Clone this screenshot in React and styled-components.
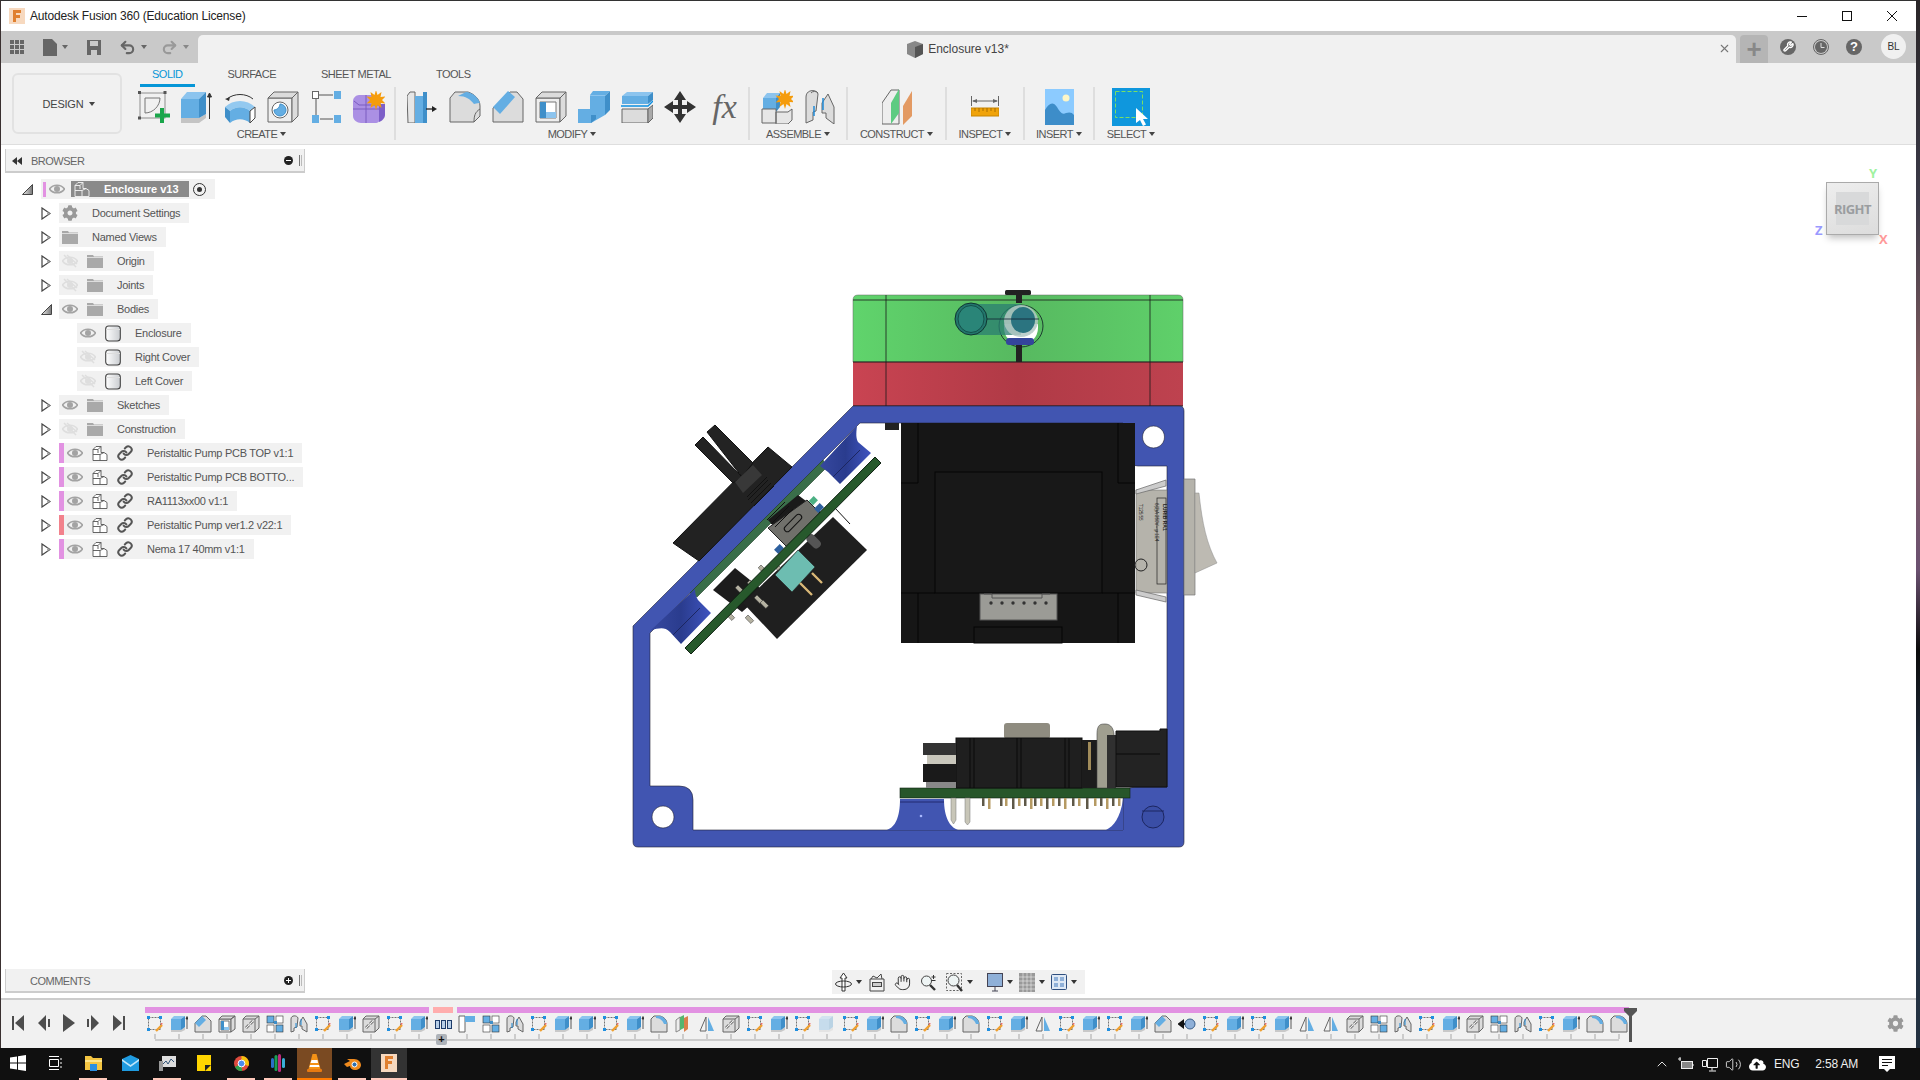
import styled, { createGlobalStyle } from 'styled-components';
import { Hand, Link, Redo2, Undo2, Volume2, ChevronUp, Wrench, X } from 'lucide-react';
import { FaCog, FaCloudUploadAlt } from 'react-icons/fa';

const BLUE = '#64aee3';
const BLUE_DARK = '#3f8fc9';
const GREY = '#dcdcdc';
const LINE = '#666';
const PANEL = '#f1f1f1';
const ENCLOSURE = '#4155b1';

const GlobalStyle = createGlobalStyle`
  html, body { margin: 0; padding: 0; background: #111; }
  * { box-sizing: border-box; }
  body { font-family: "Liberation Sans", Arial, sans-serif; }
`;

const Screen = styled.div`
  width: 1920px;
  height: 1080px;
  overflow: hidden;
  display: flex;
  flex-direction: column;
  background: linear-gradient(180deg, #2a2628 0, #3b3a48 200px, #8a6062 400px, #6a5070 570px, #0c0c0c 650px, #2a3a52 800px, #22303f 1048px);
`;
const AppWindow = styled.div`
  width: 1916px;
  height: 1048px;
  display: flex;
  flex-direction: column;
  border-top: 1px solid #333;
  border-left: 1px solid #3a3030;
  background: #fff;
`;
const TitleBar = styled.div`
  height: 30px;
  flex: none;
  display: flex;
  align-items: center;
  padding: 0 2px 0 8px;
  background: #fff;
  font-size: 12px;
  color: #222;
`;
const TitleText = styled.span`
  margin-left: 5px;
  flex: 1;
  letter-spacing: -0.17px;
`;
const WindowButton = styled.div`
  width: 45px;
  height: 30px;
  display: flex;
  align-items: center;
  justify-content: center;
`;
const TabStrip = styled.div`
  height: 32px;
  flex: none;
  display: flex;
  background: #c9c9c9;
`;
const QuickAccess = styled.div`
  width: 197px;
  display: flex;
  align-items: center;
  padding-left: 9px;
  color: #666;
`;
const QuickItem = styled.div`
  display: flex;
  align-items: center;
  gap: 5px;
  margin-right: ${(p) => p.$gap}px;
  color: ${(p) => p.$color || 'inherit'};
`;
const DocTab = styled.div`
  width: 1538px;
  margin-top: 4px;
  position: relative;
  background: ${PANEL};
  border-radius: 5px 5px 0 0;
  display: flex;
  align-items: center;
  justify-content: center;
  gap: 5px;
  font-size: 12px;
  color: #444;
  padding-right: 18px;
`;
const TabClose = styled.div`
  position: absolute;
  right: 5px;
  top: 7px;
  color: #777;
  display: flex;
`;
const NewTab = styled.div`
  width: 28px;
  margin: 4px 0 0 4px;
  border-radius: 4px 4px 0 0;
  background: #b5b5b5;
  color: #888;
  display: flex;
  align-items: center;
  justify-content: center;
  font-size: 26px;
  font-weight: 700;
`;
const StripActions = styled.div`
  display: flex;
  align-items: center;
  padding: 0 0 1px 12px;
  gap: 17px;
`;
const RoundAction = styled.div`
  width: 16px;
  height: 16px;
  border-radius: 50%;
  background: #666;
  color: #fff;
  display: flex;
  align-items: center;
  justify-content: center;
  font-size: 13px;
  font-weight: 700;
`;
const Avatar = styled.div`
  width: 25px;
  height: 25px;
  margin-left: 2px;
  border-radius: 50%;
  background: #f0f0f0;
  color: #333;
  font-size: 10px;
  display: flex;
  align-items: center;
  justify-content: center;
`;

const Ribbon = styled.div`
  height: 82px;
  flex: none;
  display: flex;
  padding: 10px 0 0 11px;
  background: ${PANEL};
  border-bottom: 1px solid #dedede;
`;
const DesignButton = styled.div`
  width: 110px;
  height: 61px;
  border: 2px solid #e2e2e2;
  border-radius: 6px;
  display: flex;
  align-items: center;
  justify-content: center;
  gap: 6px;
  padding-left: 4px;
  font-size: 11px;
  letter-spacing: -0.2px;
  color: #444;
`;
const ToolArea = styled.div`
  margin-left: 7px;
  display: flex;
  flex-direction: column;
`;
const ModeTabs = styled.div`
  display: flex;
  gap: 21px;
  padding-left: 11px;
  height: 14px;
`;
const ModeTab = styled.div`
  padding: 0 12px;
  height: 14px;
  line-height: 2px;
  font-size: 11px;
  letter-spacing: -0.5px;
  color: ${(p) => (p.$active ? '#0696d7' : '#555')};
  border-bottom: 3px solid ${(p) => (p.$active ? '#0696d7' : 'transparent')};
  white-space: nowrap;
`;
const GroupRow = styled.div`
  display: flex;
`;
const ToolGroup = styled.div`
  width: ${(p) => p.$w}px;
  height: 53px;
  box-sizing: content-box;
  border-right: 2px solid ${(p) => (p.$last ? 'transparent' : '#dedede')};
  display: flex;
  flex-direction: column;
  align-items: center;
`;
const ToolIcons = styled.div`
  height: 39px;
  flex: none;
  display: flex;
  align-items: center;
`;
const ToolSlot = styled.div`
  width: 43px;
  display: flex;
  justify-content: center;
`;
const GroupLabel = styled.div`
  display: flex;
  align-items: center;
  gap: 3px;
  margin-top: 2px;
  font-size: 11px;
  letter-spacing: -0.55px;
  color: #555;
  line-height: 12px;
`;
const Caret = styled.span`
  display: inline-block;
  width: 0;
  height: 0;
  border-left: 3px solid transparent;
  border-right: 3px solid transparent;
  border-top: 4px solid ${(p) => p.$color || '#444'};
`;
const FxGlyph = styled.span`
  margin-left: 4px;
  font-family: "Liberation Serif", serif;
  font-style: italic;
  font-size: 34px;
  line-height: 32px;
  color: #666;
`;

const Viewport = styled.div`
  flex: 1;
  position: relative;
  background: #fff;
`;
const Drawing = styled.svg`
  position: absolute;
  left: 619px;
  top: 135px;
`;
const Dock = styled.div`
  position: absolute;
  left: 4px;
  width: 300px;
  height: 24px;
  padding-top: 1px;
  top: ${(p) => p.$top}px;
  background: ${PANEL};
  border-bottom: 2px solid #ccc;
  border-right: 1px solid #ccc;
  border-left: 1px solid #ccc;
  display: flex;
  align-items: center;
  color: #666;
  font-size: 11px;
  letter-spacing: -0.5px;
`;
const DockArrows = styled.svg`
  margin-left: 6px;
  flex: none;
`;
const DockTitle = styled.span`
  flex: 1;
  margin-left: ${(p) => p.$indent}px;
`;
const DockGrip = styled.span`
  width: 3px;
  height: 11px;
  margin: 0 2px 0 5px;
  border-left: 1px solid #777;
  border-right: 1px solid #bbb;
`;
const DockDot = styled.span`
  width: 9px;
  height: 9px;
  margin-right: 1px;
  border-radius: 50%;
  background: #222;
  position: relative;
  &::before {
    content: '';
    position: absolute;
    left: 2px;
    top: 4px;
    width: 5px;
    height: 1px;
    background: #fff;
  }
  &::after {
    content: '';
    position: absolute;
    left: 4px;
    top: 2px;
    width: 1px;
    height: 5px;
    background: ${(p) => (p.$plus ? '#fff' : 'transparent')};
  }
`;
const Tree = styled.div`
  position: absolute;
  left: -1px;
  top: 32px;
  display: flex;
  flex-direction: column;
`;
const TreeRow = styled.div`
  height: 24px;
  display: flex;
  align-items: center;
  padding-left: ${(p) => p.$indent}px;
`;
const Toggle = styled.svg`
  flex: none;
  margin-right: ${(p) => p.$gap}px;
`;
const Chip = styled.div`
  height: 20px;
  display: flex;
  align-items: center;
  background: ${PANEL};
  padding-left: ${(p) => p.$pad}px;
  padding-right: 9px;
  font-size: 11px;
  letter-spacing: -0.27px;
  color: #555;
  white-space: nowrap;
`;
const ColorBar = styled.span`
  width: ${(p) => p.$w}px;
  height: ${(p) => p.$h}px;
  background: ${(p) => p.$color};
  margin-right: 3px;
`;
const CurrentRoot = styled.div`
  width: 118px;
  height: 16px;
  margin: 0 4px 0 6px;
  background: #8a8a8a;
  color: #fff;
  font-weight: 700;
  letter-spacing: 0;
  display: flex;
  align-items: center;
  padding-left: 3px;
  gap: 14px;
`;
const Label = styled.span`
  margin-left: 14px;
`;
const IconGap = styled.span`
  display: flex;
  margin-left: ${(p) => p.$gap || 0}px;
  color: ${(p) => p.$color || '#555'};
`;
const ActiveDot = styled.span`
  width: 13px;
  height: 13px;
  border-radius: 50%;
  border: 1px solid #333;
  position: relative;
  &::after {
    content: '';
    position: absolute;
    left: 3px;
    top: 3px;
    width: 5px;
    height: 5px;
    border-radius: 50%;
    background: #333;
  }
`;
const ViewCube = styled.div`
  position: absolute;
  left: 1825px;
  top: 37px;
  width: 53px;
  height: 53px;
  border: 1px solid #aaa;
  background: linear-gradient(160deg, #eee, #dcdcdc);
  box-shadow: 0 5px 7px -2px rgba(0, 0, 0, 0.25);
  display: flex;
  align-items: center;
  justify-content: center;
`;
const CubeFace = styled.div`
  width: 33px;
  height: 33px;
  background: #d8d9da;
  color: #9a9da0;
  font-family: "Open Sans", sans-serif;
  font-size: 13px;
  font-weight: 700;
  letter-spacing: -0.6px;
  display: flex;
  align-items: center;
  justify-content: center;
`;
const Axis = styled.span`
  position: absolute;
  left: ${(p) => p.$x}px;
  top: ${(p) => p.$y}px;
  color: ${(p) => p.$color};
  font-family: "Open Sans", sans-serif;
  font-size: 13px;
  font-weight: 700;
`;
const NavBar = styled.div`
  position: absolute;
  left: 831px;
  top: 825px;
  width: 253px;
  height: 24px;
  background: ${PANEL};
  display: flex;
  align-items: center;
  padding-left: 3px;
`;
const NavItem = styled.div`
  display: flex;
  align-items: center;
  gap: 4px;
  margin-right: ${(p) => p.$gap}px;
  color: #333;
`;

const Timeline = styled.div`
  height: 50px;
  flex: none;
  display: flex;
  background: ${PANEL};
  border-top: 2px solid #ccc;
  position: relative;
`;
const Transport = styled.div`
  width: 144px;
  display: flex;
  align-items: center;
  padding: 0 0 3px 11px;
  gap: 12px;
`;
const Track = styled.div`
  width: 1500px;
  position: relative;
  padding-top: 7px;
`;
const BarRow = styled.div`
  display: flex;
  gap: 4px;
  height: 6px;
`;
const TrackBar = styled.div`
  width: ${(p) => p.$w}px;
  background: ${(p) => p.$color};
`;
const StepRow = styled.div`
  display: flex;
  margin: 2px 0 0 -2px;
`;
const Step = styled.div`
  width: 24px;
  height: 24px;
  flex: none;
  position: relative;
  display: flex;
  justify-content: center;
  &::after {
    content: '';
    position: absolute;
    left: 11px;
    bottom: 0;
    width: 2px;
    height: 5px;
    background: #ccc;
  }
`;
const Ruler = styled.div`
  margin-left: 10px;
  width: 1464px;
  height: 2px;
  background: #ccc;
`;
const GroupPlus = styled.div`
  position: absolute;
  left: 291px;
  top: 34px;
  width: 11px;
  height: 11px;
  border-radius: 2px;
  background: #aeb3b9;
  color: #111;
  font-size: 11px;
  line-height: 10px;
  font-weight: 700;
  text-align: center;
`;
const Playhead = styled.svg`
  position: absolute;
  left: 1479px;
  top: 8px;
`;
const TimelineGear = styled.div`
  position: absolute;
  left: 1886px;
  top: 15px;
  color: #999;
  display: flex;
`;

const Taskbar = styled.div`
  height: 32px;
  flex: none;
  display: flex;
  align-items: center;
  background: #101010;
  color: #eee;
  font-size: 12px;
  position: relative;
`;
const TaskSlot = styled.div`
  width: ${(p) => p.$w}px;
  height: 32px;
  margin-left: ${(p) => p.$left}px;
  flex: none;
  display: flex;
  align-items: center;
  justify-content: center;
  background: ${(p) => p.$bg || 'transparent'};
  border-bottom: 2px solid ${(p) => p.$mark || 'transparent'};
`;
const TrayArea = styled.div`
  margin-left: auto;
  margin-right: 25px;
  display: flex;
  align-items: center;
  color: #eee;
`;
const TrayIcon = styled.svg`
  margin-left: ${(p) => p.$left}px;
`;
const TrayText = styled.span`
  margin-left: ${(p) => p.$left}px;
  letter-spacing: -0.2px;
`;

function Tri() {
  return <Toggle width="10" height="13" viewBox="0 0 10 13" $gap={8}><path d="M1 1 L9 6.500 L1 12 Z" fill="#fff" stroke="#444" strokeWidth="1.200" /><path d="M6 4.500 L9 6.500 L6 8.500Z" fill="#aaa" /></Toggle>;
}
function TriOpen({ gap }) {
  return <Toggle width="11" height="11" viewBox="0 0 11 11" $gap={gap}><defs><linearGradient id="tg" x1="0" x2="1"><stop offset="0" stopColor="#eee" /><stop offset="1" stopColor="#777" /></linearGradient></defs><path d="M0.500 10.500 L10.500 0.500 V10.500 Z" fill="url(#tg)" stroke="#444" /></Toggle>;
}
function Eye({ off }) {
  const c = off ? '#dedede' : '#a3a3a3';
  return (
    <svg width="16" height="16" viewBox="0 0 16 16">
      <path d="M0.500 8 C4 3 12 3 15.500 8 C12 13 4 13 0.500 8Z" fill="none" stroke={c} strokeWidth="1.600" />
      <circle cx="8" cy="8" r="3" fill={c} />
      {off && <path d="M2 2 L14 14 M5 2 L15 11" stroke={c} strokeWidth="1.500" />}
    </svg>
  );
}
function Folder() {
  return <svg width="16" height="14" viewBox="0 0 16 14"><path d="M0 1 H6 L7 2.500 H16 V14 H0Z" fill="#a9a9a9" /><rect y="3" width="16" height="1" fill="#ddd" /></svg>;
}
function BodyIcon() {
  return <svg width="16" height="17" viewBox="0 0 16 17"><defs><linearGradient id="bg" x1="0" x2="1"><stop offset="0" stopColor="#fff" /><stop offset="1" stopColor="#c9ccd0" /></linearGradient></defs><rect x="0.700" y="1" width="14.600" height="15" rx="3" fill="url(#bg)" stroke="#444" strokeWidth="1.100" /><path d="M1 4.500h14" stroke="#ddd" /></svg>;
}
function CompIcon({ light }) {
  const s = light ? '#f4f4f4' : '#555';
  return <svg width="16" height="16" viewBox="0 0 16 16"><path d="M1 4.500L4 1.500H9V7.500H12L15 9.500V15.500H1Z" fill={light ? 'none' : '#fff'} stroke={s} strokeWidth=".9" /><path d="M1 4.500H6V8M9 1.500L6 4.500M1 9.500H8V15.500M8 9.500L12 7.500" fill="none" stroke={s} strokeWidth=".9" /></svg>;
}

const tools = {
  sketch: <svg width="32" height="32" viewBox="0 0 32 32"><rect x="2" y="2" width="25" height="25" fill="none" stroke="#777" strokeWidth=".8" /><path d="M0 0h3v3H0zM25.500 0h3v3h-3zM0 25.500h3v3H0z" fill="#555" /><path d="M7 22V7h15M22 7C22 15 15 22 7 22" fill="none" stroke="#777" /><path d="M24 17v15M17 24.500h15" stroke="#1aa64b" strokeWidth="4" /></svg>,
  extrude: <svg width="32" height="32" viewBox="0 0 32 32"><path d="M0 27h18l7-4v4l-7 5H0z" fill="#c4c4c4" /><path d="M0 8h18v19H0z" fill={BLUE} /><path d="M0 8l6-7h19l-7 7z" fill="#8cc4ee" /><path d="M18 8l7-7v22l-7 4z" fill={BLUE_DARK} /><path d="M28.500 28V3M26.500 6l2-4 2 4z" stroke="#333" fill="#333" /></svg>,
  sweep: <svg width="32" height="32" viewBox="0 0 32 32"><path d="M3 8C10 2 22 2 29 8" fill="none" stroke="#333" /><path d="M1 8l5-2-1 4z" fill="#333" /><path d="M1 16C9 8 23 8 31 16L26 20C20 15 12 15 6 20Z" fill="#93c9f0" /><path d="M1 16L6 20V32L1 26Z" fill={BLUE_DARK} /><path d="M6 20C12 15 20 15 26 20V32C20 27 12 27 6 32Z" fill={BLUE} /><path d="M26 20L31 16V27L26 32Z" fill="#fff" stroke="#444" /></svg>,
  hole: <svg width="32" height="32" viewBox="0 0 32 32"><path d="M1 7h24v24H1z" fill="#eee" stroke={LINE} /><path d="M1 7l6-6h24l-6 6zM25 7l6-6v24l-6 6z" fill={GREY} stroke={LINE} /><circle cx="13" cy="19" r="8" fill="#fff" stroke={LINE} /><path d="M13 13a6 6 0 1 1-6 6c3 0 6-3 6-6z" fill={BLUE} stroke={BLUE_DARK} /></svg>,
  pattern: <svg width="29" height="32" viewBox="0 0 29 32"><path d="M7 4h14M4 8v18M8 28h13" stroke="#555" /><rect x=".5" y="0.500" width="6" height="7" fill="#fff" stroke="#666" /><rect x="22" y="0" width="7" height="8" fill={BLUE} /><rect x="0" y="24" width="7" height="8" fill={BLUE} /><rect x="22" y="24" width="7" height="8" fill={BLUE} /></svg>,
  form: <svg width="32" height="32" viewBox="0 0 32 32"><path d="M6 4h16c3 0 6 3 6 6v16c0 4-3 6-6 6H8c-4 0-8-3-8-7V10c0-3 3-6 6-6z" fill="#ab90e4" /><path d="M0 18h28M13 4v28M1 10l5 4h22" stroke="#7a5cc0" fill="none" /><path d="M26 13h6v11c0 3-3 6-6 7z" fill="#7d5fc8" /><path d="M23-1l1.500 5 4-3-1 5 5-.5-3.500 3.500 3.500 3.500-5-.5 1 5-4-3-1.500 5-1.500-5-4 3 1-5-5 .5 3.500-3.500-3.500-3.500 5 .5-1-5 4 3z" fill="#f59c0c" /></svg>,
  press: <svg width="30" height="32" viewBox="0 0 30 32"><path d="M0 5l3-4h5v31H1z" fill="#e6e6e6" stroke={LINE} /><path d="M8 5h11l1-4v31H8z" fill={BLUE} /><path d="M16 1h4v31h-4z" fill={BLUE_DARK} /><path d="M19 18h8" stroke="#222" strokeWidth="1.300" /><path d="M25 15l5 3-5 3z" fill="#222" /></svg>,
  fillet: <svg width="32" height="32" viewBox="0 0 32 32"><path d="M1 31V7l5-6h13c6 2 12 7 12 14v10l-6 6z" fill={GREY} stroke={LINE} /><path d="M9 5c8 0 12 3 16 8 3-1 5-1 6-1C29 6 23 1 17 1z" fill={BLUE} /><path d="M25 31c0-6 1-10 6-13" fill="none" stroke={LINE} /></svg>,
  chamfer: <svg width="32" height="32" viewBox="0 0 32 32"><path d="M1 31V17l5-4L18 1h7l6 7v23z" fill={GREY} stroke={LINE} /><path d="M1 16L16 0l7 6L8 23z" fill={BLUE} /></svg>,
  shell: <svg width="32" height="32" viewBox="0 0 32 32"><path d="M1 7h24v24H1z" fill="#eee" stroke={LINE} /><path d="M1 7l6-6h24l-6 6zM25 7l6-6v24l-6 6z" fill={GREY} stroke={LINE} /><path d="M5 11h16v16H5z" fill="#fff" stroke="#777" /><path d="M5 11h6v10h10v6H5z" fill={BLUE_DARK} /><path d="M11 21h10v6H11z" fill="#8cc4ee" /></svg>,
  combine: <svg width="32" height="32" viewBox="0 0 32 32"><path d="M0 18h13v14H0z" fill={BLUE} /><path d="M12 4l3-4h17l-5 5v19l-14 8V18H12z" fill={BLUE} /><path d="M27 5l5-5v19l-5 5zM13 24l5 0v4l-5 4z" fill={BLUE_DARK} /><path d="M12 4h15v1H12z" fill="#8cc4ee" /></svg>,
  offset: <svg width="32" height="32" viewBox="0 0 32 32"><path d="M1 5l5-4h26l-5 4z" fill="#8cc4ee" /><path d="M1 5h26v8H1z" fill={BLUE} /><path d="M27 5l5-4v8l-5 4z" fill={BLUE_DARK} /><path d="M0 15h27l5-5" fill="none" stroke="#0c8ee0" strokeWidth="1.400" /><path d="M1 18h26v14H1z" fill={GREY} stroke={LINE} /><path d="M27 18l5-4v13l-5 5z" fill="#aaa" stroke={LINE} /></svg>,
  move: <svg width="32" height="32" viewBox="0 0 32 32" fill="#333"><path d="M16 0l6 9h-4v5h5v-4l9 6-9 6v-4h-5v5h4l-6 9-6-9h4v-5H9v4l-9-6 9-6v4h5V9h-4z" /></svg>,
  component: <svg width="32" height="34" viewBox="0 0 32 34"><path d="M2 8l4-5h13l-4 5z" fill="#8cc4ee" /><path d="M2 8h13v14H2z" fill={BLUE} /><path d="M15 8l4-5v14l-4 5z" fill={BLUE_DARK} /><path d="M1 19h14v14H1z M15 22h12l4-3v11l-4 4H15z" fill="#e6e6e6" stroke={LINE} /><path d="M24-1l1.500 5 4-3-1 5 5-.5-3.500 3.500 3.500 3.500-5-.5 1 5-4-3-1.500 5-1.500-5-4 3 1-5-5 .5 3.500-3.500-3.500-3.500 5 .5-1-5 4 3z" fill="#f59c0c" /></svg>,
  joint: <svg width="30" height="34" viewBox="0 0 30 34"><path d="M1 7c0-8 11-8 12-3l-2 17-3 1v8L1 33z" fill={GREY} stroke={LINE} /><path d="M6 3a4 3 0 0 1 7 0" fill="none" stroke={LINE} /><path d="M17 13l6-9 6 13v17l-8-6v-5h-4z" fill={GREY} stroke={LINE} /><path d="M9 16v10M18 8v12" stroke="#1f8bd8" strokeWidth="1.500" /></svg>,
  construct: <svg width="30" height="38" viewBox="0 0 30 38"><path d="M0 15L9 2h8v34H0z" fill="#eee" stroke={LINE} /><path d="M9 36V15l8-14v24z" fill="#5ecb82" /><path d="M21 18L30 3v25l-9 9z" fill="#e39a63" /></svg>,
  inspect: <svg width="28" height="22" viewBox="0 0 28 22"><path d="M.5 0v10M27.500 0v10M2 5h24" stroke="#666" /><path d="M1 5l5-2v4zM27 5l-5-2v4z" fill="#666" /><rect y="12" width="28" height="8" fill="#f0a30a" stroke="#c98500" /><path d="M4 12v3M8 12v4M12 12v3M16 12v4M20 12v3M24 12v4" stroke="#a86e00" /></svg>,
  insert: <svg width="29" height="36" viewBox="0 0 29 36"><rect width="29" height="36" fill="#8ccbff" /><circle cx="21" cy="9" r="3.500" fill="#fdf6c8" /><path d="M0 36V21c4-7 8-9 12-3 3 5 5 8 9 6 3-1 6-1 8 2v10z" fill="#3d8dc9" /></svg>,
  select: <svg width="38" height="38" viewBox="0 0 38 38"><rect width="38" height="38" fill="#0f97dd" /><rect x="3.500" y="3.500" width="27" height="26" fill="none" stroke="#7adf63" strokeDasharray="4 2" /><path d="M24 21v15l4-3 3 6 3-1.500-3-5.500h5z" transform="translate(0 -1)" fill="#fff" /></svg>,
};

const groups = [
  { label: 'CREATE', w: 265, items: ['sketch', 'extrude', 'sweep', 'hole', 'pattern', 'form'] },
  { label: 'MODIFY', w: 352, items: ['press', 'fillet', 'chamfer', 'shell', 'combine', 'offset', 'move', 'fx'] },
  { label: 'ASSEMBLE', w: 96, items: ['component', 'joint'] },
  { label: 'CONSTRUCT', w: 97, items: ['construct'] },
  { label: 'INSPECT', w: 76, items: ['inspect'] },
  { label: 'INSERT', w: 68, items: ['insert'] },
  { label: 'SELECT', w: 72, items: ['select'], last: true },
];

const steps = 'SECHLBJSELSEGPBJSEESEFKMLSESXSEFSEFSEMSESECOSESEMMLBJSELBJSEFF'.split('');
const step = {
  S: <><rect x="2.500" y="2.500" width="12" height="12" fill="none" stroke="#555" strokeWidth=".8" strokeDasharray="2 1" /><path d="M1 1h3v3H1zM13 1h3v3h-3zM1 13h3v3H1z" fill="#1f8fe0" /><path d="M16 10l-6 6" stroke="#f0a030" strokeWidth="2.400" /><path d="M16 10l-1.500-1.500 2-.5z" fill="#e83c3c" /></>,
  E: <><path d="M1 15h10l4-3v3l-4 2H1z" fill="#c9c9c9" /><path d="M1 4h10v11H1z" fill={BLUE} /><path d="M1 4l3-3h11l-4 3z" fill="#8cc4ee" /><path d="M11 4l4-3v11l-4 3z" fill={BLUE_DARK} /><path d="M17 14V3M16 4l1-2.500 1 2.500z" stroke="#333" strokeWidth=".8" /></>,
  X: <g opacity=".3"><path d="M1 15h10l4-3v3l-4 2H1z" fill="#c9c9c9" /><path d="M1 4h10v11H1z" fill={BLUE} /><path d="M1 4l3-3h11l-4 3z" fill="#8cc4ee" /><path d="M11 4l4-3v11l-4 3z" fill={BLUE_DARK} /></g>,
  C: <><path d="M1 8L8 1h4l5 5v11H1z" fill={GREY} stroke={LINE} /><path d="M1 8L8 1l4 4-7 7z" fill={BLUE} /></>,
  F: <><path d="M1 17V4l3-3h6c4 1 7 4 7 8v8z" fill={GREY} stroke={LINE} /><path d="M6 1h4c4 1 7 4 7 8h-3c-1-3-4-6-8-6z" fill={BLUE} /></>,
  H: <><path d="M1 4h12v13H1z" fill="#eee" stroke={LINE} /><path d="M1 4l3-3h13l-4 3zM13 4l4-3v13l-4 3z" fill={GREY} stroke={LINE} /><path d="M3 6h8v9H3z" fill="#fff" stroke="#777" /><path d="M3 6h3v6h5v3H3z" fill={BLUE_DARK} /><path d="M6 12h5v3H6z" fill="#8cc4ee" /></>,
  L: <><path d="M1 4l3-3h13v12l-4 4H1z" fill={GREY} stroke={LINE} /><path d="M1 4h12l4-3M13 4v13" fill="none" stroke={LINE} /><path d="M4 13l3-3M8 9l3-3" stroke="#888" strokeWidth="3" /><path d="M4 13l3-3M8 9l3-3" stroke="#eee" strokeWidth="1" /></>,
  B: <><rect x="1" y="1" width="7" height="7" fill={BLUE} stroke="#333" strokeWidth=".6" /><rect x="10" y="1" width="7" height="7" fill="#fff" stroke="#333" strokeWidth=".6" /><rect x="1" y="10" width="7" height="7" fill="#fff" stroke="#333" strokeWidth=".6" /><rect x="10" y="10" width="7" height="7" fill={BLUE} stroke="#333" strokeWidth=".6" /><path d="M8 6h3v3H8z" fill={BLUE_DARK} /></>,
  J: <><path d="M1 4c0-4 6-4 7-1l-1 9-3 1v3l-3 1z" fill={GREY} stroke={LINE} /><path d="M10 7l3-5 4 7v8l-5-3v-3h-2z" fill={GREY} stroke={LINE} /><path d="M6 8v5M11 4v6" stroke="#1f8bd8" /></>,
  G: <><rect x="1.500" y="5.500" width="4" height="8" fill="#b8cfe8" stroke="#1d3b6a" /><rect x="7.500" y="5.500" width="4" height="8" fill="#b8cfe8" stroke="#1d3b6a" /><rect x="13.500" y="5.500" width="4" height="8" fill="#b8cfe8" stroke="#1d3b6a" /></>,
  P: <><path d="M1 1h6v16H1z" fill="#fff" stroke={LINE} /><path d="M7 1h10v6H7z" fill={BLUE} /></>,
  K: <><path d="M2 5l4-3v13l-4 2z" fill="#eee" stroke="#888" /><path d="M6 15V2l4-2v13z" fill="#54b56f" /><path d="M10 17V3l4-2v13z" fill="#d9804a" /></>,
  M: <><path d="M8 2L2 16h6z" fill="#f4f4f4" stroke={LINE} /><path d="M10 2l6 14h-6z" fill={BLUE} /></>,
  O: <><path d="M1 9h8M5 6L1 9l4 3z" stroke="#111" strokeWidth="2" fill="#111" /><circle cx="12" cy="9" r="5" fill="#8fb0d8" stroke="#3a5f8a" /></>,
};

const rows = [
  { name: 'Document Settings', vis: 'gear', kind: 'plain' },
  { name: 'Named Views', vis: 'folder', kind: 'plain' },
  { name: 'Origin', off: true, kind: 'folder' },
  { name: 'Joints', off: true, kind: 'folder' },
  { name: 'Bodies', kind: 'folder', open: true },
  { name: 'Enclosure', kind: 'body' },
  { name: 'Right Cover', off: true, kind: 'body' },
  { name: 'Left Cover', off: true, kind: 'body' },
  { name: 'Sketches', kind: 'folder' },
  { name: 'Construction', off: true, kind: 'folder' },
  { name: 'Peristaltic Pump PCB TOP v1:1', kind: 'comp', color: '#e292e2' },
  { name: 'Peristaltic Pump PCB BOTTO...', kind: 'comp', color: '#e292e2' },
  { name: 'RA1113xx00 v1:1', kind: 'comp', color: '#e292e2' },
  { name: 'Peristaltic Pump ver1.2 v22:1', kind: 'comp', color: '#f2828c' },
  { name: 'Nema 17 40mm v1:1', kind: 'comp', color: '#e292e2' },
];

function BrowserRow({ row }) {
  if (row.kind === 'body') {
    return (
      <TreeRow $indent={77}>
        <Chip $pad={3}><Eye off={row.off} /><IconGap $gap={9}><BodyIcon /></IconGap><Label>{row.name}</Label></Chip>
      </TreeRow>
    );
  }
  return (
    <TreeRow $indent={41}>
      {row.open ? <TriOpen gap={7} /> : <Tri />}
      {row.kind === 'plain' && (
        <Chip $pad={3}>
          {row.vis === 'gear' ? <IconGap $color="#999"><FaCog size={16} /></IconGap> : <Folder />}
          <Label>{row.name}</Label>
        </Chip>
      )}
      {row.kind === 'folder' && (
        <Chip $pad={3}><Eye off={row.off} /><IconGap $gap={9}><Folder /></IconGap><Label>{row.name}</Label></Chip>
      )}
      {row.kind === 'comp' && (
        <Chip $pad={0}>
          <ColorBar $w={5} $h={20} $color={row.color} />
          <Eye />
          <IconGap $gap={9}><CompIcon /></IconGap>
          <IconGap $gap={9}><Link size={16} strokeWidth={3} /></IconGap>
          <Label>{row.name}</Label>
        </Chip>
      )}
    </TreeRow>
  );
}

function CadModel() {
  const pins = [982, 988, 1000, 1005, 1012, 1018, 1024, 1030, 1034, 1040, 1046, 1052, 1058, 1064, 1072, 1078, 1086, 1094, 1100, 1106, 1112, 1118];
  const chips = [[729, 612], [738, 585], [750, 580], [757, 595], [763, 600], [748, 615], [775, 562], [761, 565]];
  return (
    <Drawing width="620" height="580" viewBox="620 280 620 580">
      <defs>
        <linearGradient id="greenBox" x1="0" x2="1"><stop offset="0" stopColor="#60d46c" /><stop offset=".5" stopColor="#57b960" /><stop offset="1" stopColor="#5fd06a" /></linearGradient>
        <linearGradient id="redBox" x1="0" x2="1"><stop offset="0" stopColor="#c94452" /><stop offset=".5" stopColor="#b03a46" /><stop offset="1" stopColor="#be424f" /></linearGradient>
        <linearGradient id="post" x1="0" x2="1"><stop offset="0" stopColor="#36489f" /><stop offset=".5" stopColor="#2a3c8e" /><stop offset="1" stopColor="#3f54c0" /></linearGradient>
      </defs>
      {/* lid */}
      <path d="M853 300 q0-5 5-5 h320 q5 0 5 5 v62 h-330z" fill="url(#greenBox)" stroke="#666" strokeWidth=".5" />
      <rect x="853" y="362" width="330" height="44" fill="url(#redBox)" />
      <path d="M853 300h330M886 295v111M1150 295v111" stroke="#1a1a1a" strokeWidth=".8" fill="none" />
      <path d="M853 362h330M853 406h330" stroke="#1a1a1a" strokeWidth="1.200" />
      <rect x="1005" y="290" width="26" height="5" rx="1.500" fill="#222" />
      <rect x="1016" y="295" width="6" height="8" fill="#222" />
      <ellipse cx="1021" cy="326" rx="22" ry="21" fill="none" stroke="#1c3c30" />
      <path d="M1004 328a17 17 0 0 0 34 0v-4h-34z" fill="#fff" />
      <rect x="1006" y="338" width="28" height="7" rx="3" fill="#34459c" />
      <rect x="1016" y="345" width="6" height="17" fill="#222" />
      <path d="M971 304h50v31h-50z" fill="#2a7d72" opacity=".75" />
      <ellipse cx="971" cy="319" rx="16" ry="16" fill="#23766c" stroke="#0f3532" />
      <ellipse cx="971" cy="319" rx="13" ry="13.500" fill="#2a8578" stroke="#14504a" />
      <ellipse cx="1021" cy="321" rx="17" ry="16" fill="#b3c8c4" opacity=".85" />
      <ellipse cx="1023" cy="320" rx="12" ry="13" fill="#2b7480" />
      <path d="M987 319h52" stroke="#123" strokeWidth=".8" />

      {/* enclosure shell, cavity left open */}
      <path fillRule="evenodd" fill={ENCLOSURE} stroke="#223" strokeWidth=".6" d="M853 406 H1179 q5 0 5 5 V842 q0 5 -5 5 H638 q-5 0 -5 -5 V626 Z M860 423 L650 633 V786 H679 q14 0 14 14 V830 H1123 V800 q0-13 13-13 H1167 V466 H1138 q-15 0-15-16 V423 Z M1153.500 426 a11 11 0 1 0 .01 0 Z M663 806 a11 11 0 1 0 .01 0 Z" />
      <ellipse cx="1153" cy="817" rx="11" ry="11" fill="#3a4ea6" stroke="#1c2660" />
      <path d="M1142 811h22" stroke="#1c2660" />

      {/* stepper motor */}
      <rect x="901" y="423" width="234" height="220" fill="#161616" />
      <path d="M918 423v60H901M1118 423v60h17M918 593v50M1118 593v50M901 593h34M1102 593h33" fill="none" stroke="#050505" />
      <rect x="935" y="472" width="167" height="121" fill="#181818" stroke="#050505" />
      <rect x="974" y="627" width="88" height="16" fill="#171717" stroke="#050505" />
      <rect x="980" y="594" width="77" height="26" fill="#9b9b96" stroke="#555" />
      <path d="M984 594h8v4h50v-4h8" fill="none" stroke="#555" />
      {[991, 1002, 1013, 1024, 1035, 1046].map((x) => <circle key={x} cx={x} cy="603" r="1.700" fill="#333" />)}
      <rect x="885" y="423" width="14" height="7" fill="#222" />

      {/* rocker switch */}
      <rect x="1136" y="490" width="31" height="103" fill="#b5b3ab" stroke="#666" strokeWidth=".5" />
      <path d="M1136 490l30-10v6l-30 8zM1136 595l30 7v-5l-30-7z" fill="#ccc" stroke="#666" strokeWidth=".7" />
      <rect x="1157" y="498" width="9" height="86" fill="none" stroke="#222" strokeWidth=".7" />
      <text transform="translate(1163 504) rotate(90)" fontSize="5" fontWeight="700" fill="#222" fontFamily="Liberation Sans">LURIB RA1</text>
      <text transform="translate(1155 503) rotate(90)" fontSize="4.500" fill="#222" fontFamily="Liberation Sans">6(2)A 250V~ μ 1E4</text>
      <text transform="translate(1139 504) rotate(90)" fontSize="4.500" fill="#222" fontFamily="Liberation Sans">T125/55</text>
      <circle cx="1141" cy="565" r="6" fill="none" stroke="#222" />
      <path d="M1184 479h11v116h-11z" fill="#b5b3ab" stroke="#777" strokeWidth=".7" />
      <path d="M1195 493h4c3 30 8 52 18 70l-22 10z" fill="#bdbab2" stroke="#888" strokeWidth=".5" />

      {/* angled board assembly */}
      <path d="M673 543L768 447 792 467 699 561z" fill="#222" stroke="#111" />
      <path d="M707 432l8-7 38 38-11 14z" fill="#232323" stroke="#111" />
      <path d="M695 445l8-8 39 40-9 6z" fill="#232323" stroke="#111" />
      <path d="M735 482l18-17 9 10-19 18z" fill="#383838" />
      <path d="M748 500l20-20M751 503l20-20M754 506l20-20M747 497l20-20" stroke="#111" />
      <path d="M823 460l4 7-130 130-7-4z" fill="#3a6e4a" stroke="#1a3a22" strokeWidth=".6" />
      <path d="M713 590l22-22 30 24-23 20z" fill="#1c1c1c" />
      <path d="M833 517l34 33-90 89-34-36z" fill="#1f1f1f" />
      <path d="M768 520l30-25 24 18-28 36z" fill="#1a1a1a" />
      <path d="M807 500l13 13-33 34-19-19z" fill="#70706b" stroke="#222" />
      <rect x="782" y="520" width="22" height="6" rx="3" transform="rotate(-45 793 523)" fill="none" stroke="#111" />
      <path d="M767 520l18-18M771 524l18-18M775 527l18-18" stroke="#111" />
      {chips.map(([x, y]) => <rect key={x} x={x} y={y} width="8" height="4" transform={`rotate(45 ${x} ${y})`} fill="#b5b2a2" stroke="#333" strokeWidth=".5" />)}
      <rect x="775" y="546" width="8" height="6" transform="rotate(-45 779 549)" fill="#2d5f9e" />
      <rect x="815" y="505" width="8" height="6" transform="rotate(-45 819 508)" fill="#2d5f9e" />
      <rect x="810" y="498" width="7" height="6" transform="rotate(-45 813 501)" fill="#4bb083" />
      <path d="M798 550l17 17-23 25-17-17z" fill="#6dbdb1" stroke="#222" strokeWidth=".6" />
      <path d="M812 573l10 10M800 583l12 12" stroke="#d9b877" strokeWidth="2.400" />
      <rect x="806" y="537" width="16" height="9" rx="4" transform="rotate(45 814 541)" fill="#555" />
      <path d="M835 508l15 16" stroke="#111" />
      <path d="M875 457l6 6-190 191-6-6z" fill="#27592c" stroke="#0f2212" />
      <path d="M857 426c-1 8-1 12 1 16l13 11-31 31-12-12-8-6z" fill="url(#post)" />
      <path d="M833 477l27-27" stroke="#1c2660" />
      <path d="M695 589c0 4 1 8 3 11l13 13-30 31-11-12c-6-6-12-3-19-2z" fill="url(#post)" />
      <path d="M673 635l27-27" stroke="#1c2660" />

      {/* lower board */}
      <path d="M887 830c8-3 13-12 13-31h44c0 19 6 28 14 31z" fill={ENCLOSURE} />
      <path d="M900 802h44" stroke="#222a70" />
      <circle cx="921" cy="816" r="1.300" fill="#a8b8ff" />
      <path d="M1106 830c8-4 14-12 17-30v30z" fill={ENCLOSURE} />
      <rect x="900" y="788" width="230" height="10" fill="#27562a" stroke="#0f2212" strokeWidth=".6" />
      <rect x="1004" y="723" width="46" height="16" rx="3" fill="#8f8c80" />
      <rect x="956" y="738" width="126" height="50" fill="#1f1f1f" stroke="#111" />
      <path d="M970 738v50M974 738v50M1017 738v50M1021 738v50M1065 738v50M1069 738v50" stroke="#0a0a0a" />
      <rect x="923" y="743" width="33" height="12" fill="#333" />
      <rect x="927" y="755" width="29" height="9" fill="#c9c7bc" />
      <rect x="923" y="764" width="33" height="18" fill="#1a1a1a" />
      <rect x="926" y="782" width="30" height="6" fill="#888" />
      <rect x="1082" y="740" width="15" height="48" fill="#1c1c1c" />
      <rect x="1088" y="742" width="3" height="28" fill="#a08b5a" />
      <path d="M1097 788v-54c0-10 4-10 8-10s8 2 9 10v54z" fill="#a09f90" stroke="#444" strokeWidth=".6" />
      <path d="M1107 735h9v53h-9z" fill="#303030" />
      <path d="M1116 731h44v-2h7v58h-51z" fill="#232323" stroke="#111" />
      <path d="M1116 754h44" stroke="#0a0a0a" />
      {pins.map((x, i) => <rect key={x} x={x} y="798" width="2.500" height={i % 3 === 1 ? 11 : 8} fill={i % 2 ? '#b59a63' : '#5e5848'} />)}
      <path d="M951 798h5v22l-2.500 4-2.500-4zM965 798h5v24l-2.500 3-2.500-3z" fill="#c8c6b8" stroke="#777" strokeWidth=".5" />
    </Drawing>
  );
}

function TransportButton({ d }) {
  return <svg width="13" height="18" viewBox="0 0 13 18" fill="#4d4d4d"><path d={d} /></svg>;
}

export default function App() {
  return (
    <>
      <GlobalStyle />
      <Screen>
        <AppWindow>
          <TitleBar>
            <svg width="16" height="16" viewBox="0 0 16 16"><rect width="16" height="16" fill="#f7d9bf" /><path d="M4 2h8v3H7v2h4v3H7v4H4z" fill="#e08030" /></svg>
            <TitleText>Autodesk Fusion 360 (Education License)</TitleText>
            <WindowButton><svg width="10" height="10" viewBox="0 0 10 10"><path d="M0 5.500h10" stroke="#111" /></svg></WindowButton>
            <WindowButton><svg width="10" height="10" viewBox="0 0 10 10"><rect x=".5" y=".5" width="9" height="9" fill="none" stroke="#111" /></svg></WindowButton>
            <WindowButton><svg width="10" height="10" viewBox="0 0 10 10"><path d="M0 0l10 10M10 0L0 10" stroke="#111" /></svg></WindowButton>
          </TitleBar>

          <TabStrip>
            <QuickAccess>
              <QuickItem $gap={18}>
                <svg width="15" height="15" viewBox="0 0 15 15" fill="#666">{[0, 5, 10].flatMap((x) => [0, 5, 10].map((y) => <rect key={`${x}${y}`} x={x} y={y} width="4" height="4" />))}</svg>
              </QuickItem>
              <QuickItem $gap={19}>
                <svg width="14" height="17" viewBox="0 0 14 17" fill="#666"><path d="M0 0h9l5 5v12H0z" /></svg>
                <Caret $color="#666" />
              </QuickItem>
              <QuickItem $gap={18}>
                <svg width="14" height="15" viewBox="0 0 14 15"><path d="M0 0h14v15H0z" fill="#666" /><path d="M3 1h8v5H3zM4 10h6v5H4z" fill="#c9c9c9" /></svg>
              </QuickItem>
              <QuickItem $gap={14}><Undo2 size={17} strokeWidth={3} /><Caret $color="#666" /></QuickItem>
              <QuickItem $gap={0} $color="#999"><Redo2 size={17} strokeWidth={3} /><Caret $color="#888" /></QuickItem>
            </QuickAccess>
            <DocTab>
              <svg width="16" height="17" viewBox="0 0 16 17"><path d="M0 3l8-3 8 3v10l-8 4-8-4z" fill="#888" /><path d="M8 6l8-3v10l-8 4z" fill="#555" /></svg>
              Enclosure v13*
              <TabClose><X size={13} /></TabClose>
            </DocTab>
            <NewTab>+</NewTab>
            <StripActions>
              <RoundAction><Wrench size={11} strokeWidth={3} /></RoundAction>
              <svg width="16" height="16" viewBox="0 0 16 16"><circle cx="8" cy="8" r="7.500" fill="none" stroke="#666" /><circle cx="8" cy="8" r="6" fill="#666" /><path d="M8 4v4.500h3.500" fill="none" stroke="#ddd" /></svg>
              <RoundAction>?</RoundAction>
              <Avatar>BL</Avatar>
            </StripActions>
          </TabStrip>

          <Ribbon>
            <DesignButton>DESIGN <Caret /></DesignButton>
            <ToolArea>
              <ModeTabs>
                <ModeTab $active>SOLID</ModeTab>
                <ModeTab>SURFACE</ModeTab>
                <ModeTab>SHEET METAL</ModeTab>
                <ModeTab>TOOLS</ModeTab>
              </ModeTabs>
              <GroupRow>
                {groups.map((g) => (
                  <ToolGroup key={g.label} $w={g.w} $last={g.last}>
                    <ToolIcons>
                      {g.items.map((t) => <ToolSlot key={t}>{t === 'fx' ? <FxGlyph>fx</FxGlyph> : tools[t]}</ToolSlot>)}
                    </ToolIcons>
                    <GroupLabel>{g.label} <Caret /></GroupLabel>
                  </ToolGroup>
                ))}
              </GroupRow>
            </ToolArea>
          </Ribbon>

          <Viewport>
            <CadModel />
            <Dock $top={4}>
              <DockArrows width="10" height="8" viewBox="0 0 10 8" fill="#333"><path d="M5 0v8L0 4zM10 0v8L5 4z" /></DockArrows>
              <DockTitle $indent={9}>BROWSER</DockTitle>
              <DockDot />
              <DockGrip />
            </Dock>
            <Tree>
              <TreeRow $indent={22}>
                <TriOpen gap={8} />
                <Chip $pad={2}>
                  <ColorBar $w={3} $h={15} $color="#e292e2" />
                  <Eye />
                  <CurrentRoot><CompIcon light />Enclosure v13</CurrentRoot>
                  <ActiveDot />
                </Chip>
              </TreeRow>
              {rows.map((r) => <BrowserRow key={r.name} row={r} />)}
            </Tree>
            <Axis $x={1868} $y={19} $color="#9ff29f">Y</Axis>
            <Axis $x={1814} $y={76} $color="#9a9aff">Z</Axis>
            <Axis $x={1878} $y={85} $color="#ff9a9a">X</Axis>
            <ViewCube><CubeFace>RIGHT</CubeFace></ViewCube>
            <Dock $top={824}>
              <DockTitle $indent={24}>COMMENTS</DockTitle>
              <DockDot $plus />
              <DockGrip />
            </Dock>
            <NavBar>
              <NavItem $gap={7}>
                <svg width="17" height="20" viewBox="0 0 17 20" fill="none" stroke="#333"><path d="M8.500 1L5 6h2v13h3V6h2z" fill="#fff" /><ellipse cx="8.500" cy="12" rx="8" ry="3" /></svg>
                <Caret $color="#333" />
              </NavItem>
              <NavItem $gap={9}>
                <svg width="16" height="19" viewBox="0 0 16 19" fill="none" stroke="#444"><path d="M1 6h14v12H1zM2 6l2-3 4 2 4-4 1 5" /><rect x="3.500" y="9.500" width="9" height="4" fill="#ccc" /></svg>
              </NavItem>
              <NavItem $gap={9}><Hand size={17} strokeWidth={1.4} /></NavItem>
              <NavItem $gap={9}>
                <svg width="17" height="17" viewBox="0 0 17 17" fill="none"><circle cx="6.500" cy="7" r="5" fill="#eef4f4" stroke="#444" /><path d="M10 11l5 5" stroke="#333" strokeWidth="2.400" /><path d="M13.500 1v4M11.500 3h4M11.500 6.500h4" stroke="#333" /></svg>
              </NavItem>
              <NavItem $gap={14}>
                <svg width="17" height="19" viewBox="0 0 17 19" fill="none"><rect x=".5" y=".5" width="15" height="17" stroke="#666" strokeDasharray="2 1.500" /><circle cx="7.500" cy="7.500" r="5.500" fill="#eef4f4" stroke="#444" /><path d="M11 12l5 6" stroke="#333" strokeWidth="2.400" /></svg>
                <Caret $color="#333" />
              </NavItem>
              <NavItem $gap={6}>
                <svg width="16" height="19" viewBox="0 0 16 19"><rect x=".5" y=".5" width="15" height="13" fill="#8fb0d8" stroke="#445" /><path d="M5 18h6M8 14v4" stroke="#445" /></svg>
                <Caret $color="#333" />
              </NavItem>
              <NavItem $gap={6}>
                <svg width="16" height="19" viewBox="0 0 16 19" fill="#999"><rect width="16" height="19" /><path d="M4 0v19M8 0v19M12 0v19M0 4h16M0 8h16M0 12h16M0 16h16" stroke="#eee" strokeWidth=".6" /></svg>
                <Caret $color="#333" />
              </NavItem>
              <NavItem $gap={0}>
                <svg width="16" height="16" viewBox="0 0 16 16"><rect x=".5" y=".5" width="15" height="15" rx="1" fill="#dfe9f5" stroke="#2f4f7f" /><path d="M3 3h4v4H3zM9 3h4v4H9zM3 9h4v4H3zM9 9h4v4H9z" fill="#8fb0d8" /></svg>
                <Caret $color="#333" />
              </NavItem>
            </NavBar>
          </Viewport>

          <Timeline>
            <Transport>
              <TransportButton d="M0 2h2v14H0zM12 1v16L3 9z" />
              <TransportButton d="M9 1v16L1 9zM11 5h2v8h-2z" />
              <TransportButton d="M1 0l12 9-12 9z" />
              <TransportButton d="M4 1v16l8-8zM0 5h2v8H0z" />
              <TransportButton d="M11 2h2v14h-2zM1 1v16l9-8z" />
            </Transport>
            <Track>
              <BarRow>
                <TrackBar $w={284} $color="#e292e2" />
                <TrackBar $w={20} $color="#ffadad" />
                <TrackBar $w={1172} $color="#e292e2" />
              </BarRow>
              <StepRow>
                {steps.map((s, i) => (
                  <Step key={i}><svg width="18" height="18" viewBox="0 0 18 18">{step[s]}</svg></Step>
                ))}
              </StepRow>
              <Ruler />
              <GroupPlus>+</GroupPlus>
              <Playhead width="13" height="34" viewBox="0 0 13 34"><path d="M0 0h13v3l-5 5v26H5V8L0 3z" fill="#555" /></Playhead>
            </Track>
            <TimelineGear><FaCog size={17} /></TimelineGear>
          </Timeline>
        </AppWindow>

        <Taskbar>
          <TaskSlot $w={16} $left={10}>
            <svg width="16" height="16" viewBox="0 0 16 16" fill="#fff"><path d="M0 2.500l7-1v6H0zM8 1.300L16 0v7.500H8zM0 8.500h7v6l-7-1zM8 8.500h8V16l-8-1.300z" /></svg>
          </TaskSlot>
          <TaskSlot $w={16} $left={20}>
            <svg width="16" height="16" viewBox="0 0 16 16" fill="none" stroke="#fff"><path d="M3.500 4.500h9v7h-9zM3 1.500h10M3 14.500h10M15 3v2M15 7v2M15 11v2" /></svg>
          </TaskSlot>
          <TaskSlot $w={28} $left={17} $mark="#ffc9bb">
            <svg width="17" height="16" viewBox="0 0 17 16"><path d="M0 1h6l2 2h9v12H0z" fill="#f4c542" /><path d="M0 5h17v2H0z" fill="#fde48a" /><path d="M5 9h7v7H5z" fill="#2b8fe0" /></svg>
          </TaskSlot>
          <TaskSlot $w={17} $left={15}>
            <svg width="17" height="16" viewBox="0 0 17 16"><path d="M0 4l8.500-4L17 4v12H0z" fill="#1f9be0" /><path d="M0 4l8.500 6L17 4v2l-8.500 6L0 6z" fill="#bfe6fa" /></svg>
          </TaskSlot>
          <TaskSlot $w={28} $left={14} $mark="#ffc9bb">
            <svg width="17" height="16" viewBox="0 0 17 16"><rect x="3" y="1" width="14" height="11" fill="#ddd" /><path d="M4 9l3-3 2 3 3-5 3 3" fill="none" stroke="#357" /><rect y="6" width="4" height="10" fill="#999" /></svg>
          </TaskSlot>
          <TaskSlot $w={14} $left={16}>
            <svg width="14" height="16" viewBox="0 0 14 16"><path d="M0 0h14v16H0z" fill="#ffd500" /><path d="M8 16l6-6H8z" fill="#222" /></svg>
          </TaskSlot>
          <TaskSlot $w={28} $left={16} $mark="#ffc9bb">
            <svg width="15" height="15" viewBox="0 0 15 15"><circle cx="7.500" cy="7.500" r="7.500" fill="#dd4b3e" /><path d="M7.500 7.500L1 11a7.500 7.500 0 0 0 7 4z" fill="#2ea24c" /><path d="M7.500 0a7.500 7.500 0 0 1 7 10l-7-2.500z" fill="#f4c20d" /><circle cx="7.500" cy="7.500" r="3.400" fill="#4a8cf0" stroke="#fff" /></svg>
          </TaskSlot>
          <TaskSlot $w={28} $left={9} $mark="#ffc9bb">
            <svg width="14" height="18" viewBox="0 0 14 18"><rect x="0" y="4" width="3" height="10" rx="1.500" fill="#2a6fc9" /><rect x="3.500" y="1" width="3" height="16" rx="1.500" fill="#1aa055" /><rect x="7" y="0" width="3" height="18" rx="1.500" fill="#c02a7f" /><rect x="11" y="4" width="3" height="10" rx="1.500" fill="#3ab0d8" /></svg>
          </TaskSlot>
          <TaskSlot $w={35} $left={5} $bg="#7a4a22" $mark="#ff7a00">
            <svg width="15" height="18" viewBox="0 0 15 18"><path d="M5.500 0h4l4 15h-12z" fill="#f59216" /><path d="M4.500 6h6l.5 3h-7.500zM3 11h9l.5 2h-10z" fill="#fff" /><rect y="15" width="15" height="3" rx="1" fill="#e87a10" /></svg>
          </TaskSlot>
          <TaskSlot $w={28} $left={6} $mark="#ffc9bb">
            <svg width="17" height="14" viewBox="0 0 17 14"><path d="M0 8l6-3L3 3h7c4 0 7 3 7 6s-3 5-6 5-5-2-5-4l-3 1z" fill="#f08a1d" /><circle cx="10.500" cy="8.500" r="2.500" fill="#2f6fb0" stroke="#fff" /></svg>
          </TaskSlot>
          <TaskSlot $w={36} $left={5} $bg="#333" $mark="#ffc9bb">
            <svg width="16" height="18" viewBox="0 0 16 18"><rect width="16" height="18" fill="#f7d9bf" /><path d="M4 2h8v3H7v2h4v3H7v5H4z" fill="#e08030" /></svg>
          </TaskSlot>
          <TrayArea>
            <ChevronUp size={16} strokeWidth={1.4} />
            <TrayIcon $left={8} width="16" height="14" viewBox="0 0 16 14" fill="none" stroke="#eee"><rect x="3.500" y="4.500" width="11" height="7" fill="#888" /><path d="M15 7v2M0 2h3M2 0v4" /></TrayIcon>
            <TrayIcon $left={8} width="16" height="15" viewBox="0 0 16 15" fill="none" stroke="#eee"><path d="M5.500 1.500h10v9h-10zM0.500 3.500h4v6h-4zM10 10.500v3M7 14h7" /></TrayIcon>
            <IconGap $gap={7} $color="#eee"><Volume2 size={17} strokeWidth={1.2} /></IconGap>
            <IconGap $gap={7} $color="#fff"><FaCloudUploadAlt size={17} /></IconGap>
            <TrayText $left={8}>ENG</TrayText>
            <TrayText $left={16}>2:58 AM</TrayText>
            <TrayIcon $left={21} width="16" height="17" viewBox="0 0 16 17"><path d="M0 0h16v13h-5l-3 3-3-3H0z" fill="#fff" /><path d="M3 3.500h10M3 6.500h10M3 9.500h6" stroke="#111" /></TrayIcon>
          </TrayArea>
        </Taskbar>
      </Screen>
    </>
  );
}
